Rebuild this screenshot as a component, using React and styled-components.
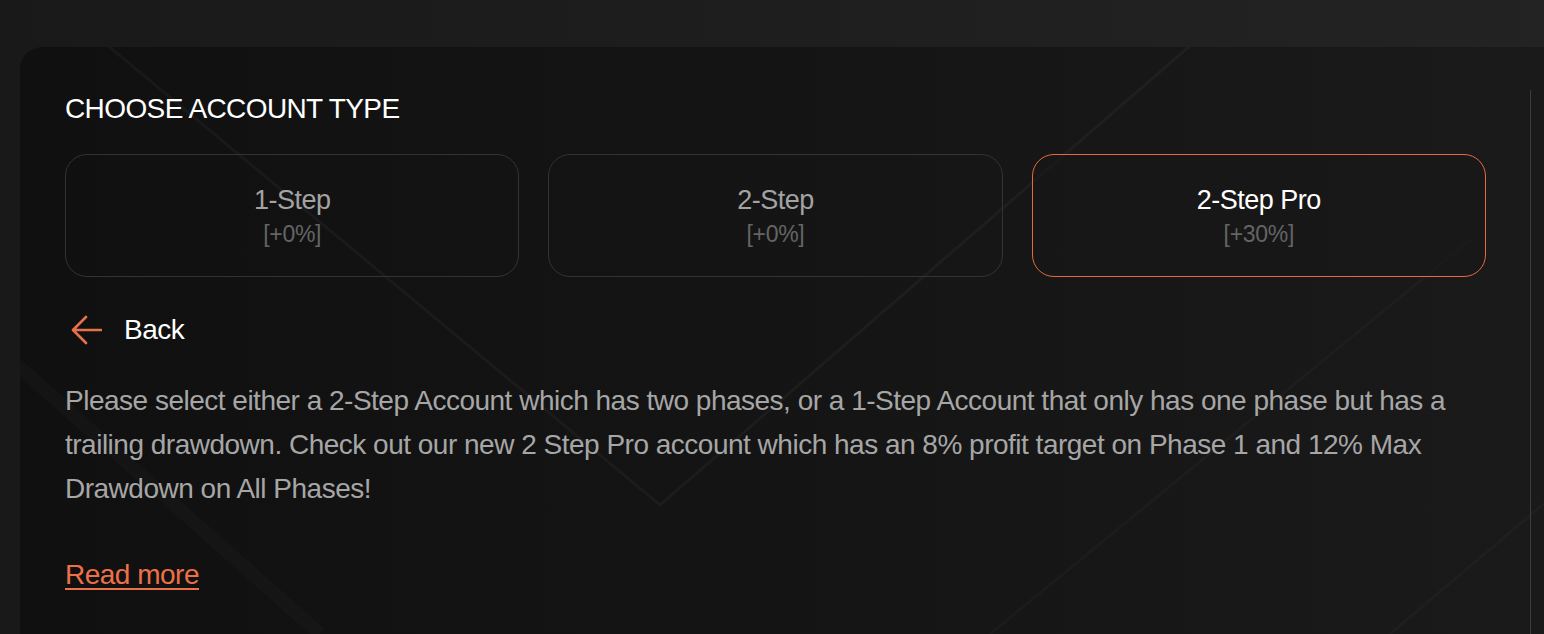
import React, { useState } from 'react'
import styled, { createGlobalStyle } from 'styled-components';

const GlobalStyle = createGlobalStyle`
html, body {
  margin: 0;
  padding: 0;
  background: #1f1f1f;
  font-family: "Liberation Sans", Arial, sans-serif;
  overflow: hidden;
}
`;

const Page = styled.div`
width: 1544px;
height: 634px;
padding: 47px 0 0 20px;
box-sizing: border-box;
background: linear-gradient(90deg, #191919 0%, #1e1e1e 50%, #232323 100%);
position: relative;
overflow: hidden;
`;

const Panel = styled.div`
position: relative;
height: 100%;
display: flex;
border-top-left-radius: 22px;
background: linear-gradient(90deg, #101010 0%, #141414 45%, #1a1a1a 100%);
overflow: hidden;
`;

const Lines = styled.svg`
position: absolute;
left: -20px;
top: -47px;
pointer-events: none;
`;

const Content = styled.div`
position: relative;
width: 1421px;
padding: 45px 0 0 45px;
`;

const Rail = styled.div`
position: relative;
width: 1px;
margin: 43px 0 0 44px;
background: #3d3d3d;
`;

const Title = styled.h1`
margin: 0;
font-size: 28px;
line-height: 34px;
font-weight: 400;
letter-spacing: -0.6px;
color: #ffffff;
`;

const Options = styled.div`
display: grid;
grid-template-columns: repeat(3, 1fr);
gap: 29px;
margin-top: 28px;
`;

const Option = styled.button`
height: 123px;
display: flex;
flex-direction: column;
align-items: center;
justify-content: center;
background: ${(p) => (p.active ? 'rgba(24,24,24,0.6)' : 'transparent')};
border: 1px solid ${(p) => (p.active ? '#e8693f' : '#333333')};
border-radius: 22px;
cursor: pointer;
font-family: inherit;
padding: 2px 0 0;
`;

const OptionName = styled.span`
font-size: 27px;
line-height: 31px;
letter-spacing: -0.5px;
color: ${(p) => (p.active ? '#ffffff' : '#a3a3a3')};
`;

const OptionBonus = styled.span`
margin-top: 4px;
font-size: 23px;
line-height: 28px;
letter-spacing: -0.3px;
color: #646464;
`;

const BackRow = styled.div`
display: flex;
align-items: center;
gap: 22px;
height: 34px;
margin-top: 36px;
padding-left: 6px;
cursor: pointer;
`;

const BackLabel = styled.span`
font-size: 28px;
letter-spacing: -0.5px;
color: #ffffff;
`;

const Text = styled.p`
margin: 32px 0 0;
font-size: 28px;
line-height: 44px;
letter-spacing: -0.5px;
color: #a6a6a6;
`;

const ReadMore = styled.a`
display: inline-block;
margin-top: 47px;
font-size: 28px;
line-height: 34px;
letter-spacing: -0.5px;
color: #ec7048;
text-decoration: underline;
text-underline-offset: 4px;
text-decoration-thickness: 2px;
cursor: pointer;
`;

const options = [
  { name: '1-Step', bonus: '[+0%]' },
  { name: '2-Step', bonus: '[+0%]' },
  { name: '2-Step Pro', bonus: '[+30%]' },
];

function ArrowBack() {
  return (
    <svg width="31" height="30" viewBox="0 0 31 30" fill="none">
      <path d="M30 15H2.5M15 2L2 15l13 13" stroke="#e8714d" strokeWidth="2.6" strokeLinecap="round" strokeLinejoin="round" />
    </svg>
  );
}

function Decoration() {
  return (
    <Lines width="1544" height="634" viewBox="0 0 1544 634">
      <path d="M53 0L660 505L1243 0" stroke="rgba(255,255,255,0.035)" strokeWidth="3" fill="none" />
      <path d="M0 350L320 634" stroke="rgba(255,255,255,0.02)" strokeWidth="14" />
      <path d="M1470 240L990 634" stroke="rgba(255,255,255,0.022)" strokeWidth="3" />
      <path d="M1560 490L1390 634" stroke="rgba(255,255,255,0.022)" strokeWidth="3" />
    </Lines>
  );
}

export default function App() {
  const [selected, setSelected] = useState(2);
  return (
    <>
      <GlobalStyle />
      <Page>
        <Panel>
          <Decoration />
          <Content>
            <Title>CHOOSE ACCOUNT TYPE</Title>
            <Options>
              {options.map((o, i) => (
                <Option key={o.name} active={i === selected} onClick={() => setSelected(i)}>
                  <OptionName active={i === selected}>{o.name}</OptionName>
                  <OptionBonus>{o.bonus}</OptionBonus>
                </Option>
              ))}
            </Options>
            <BackRow>
              <ArrowBack />
              <BackLabel>Back</BackLabel>
            </BackRow>
            <Text>
              Please select either a 2-Step Account which has two phases, or a 1-Step Account that only has one phase but has a trailing drawdown. Check out our new 2 Step Pro account which has an 8% profit target on Phase 1 and 12% Max Drawdown on All Phases!
            </Text>
            <ReadMore>Read more</ReadMore>
          </Content>
          <Rail />
        </Panel>
      </Page>
    </>
  );
}
